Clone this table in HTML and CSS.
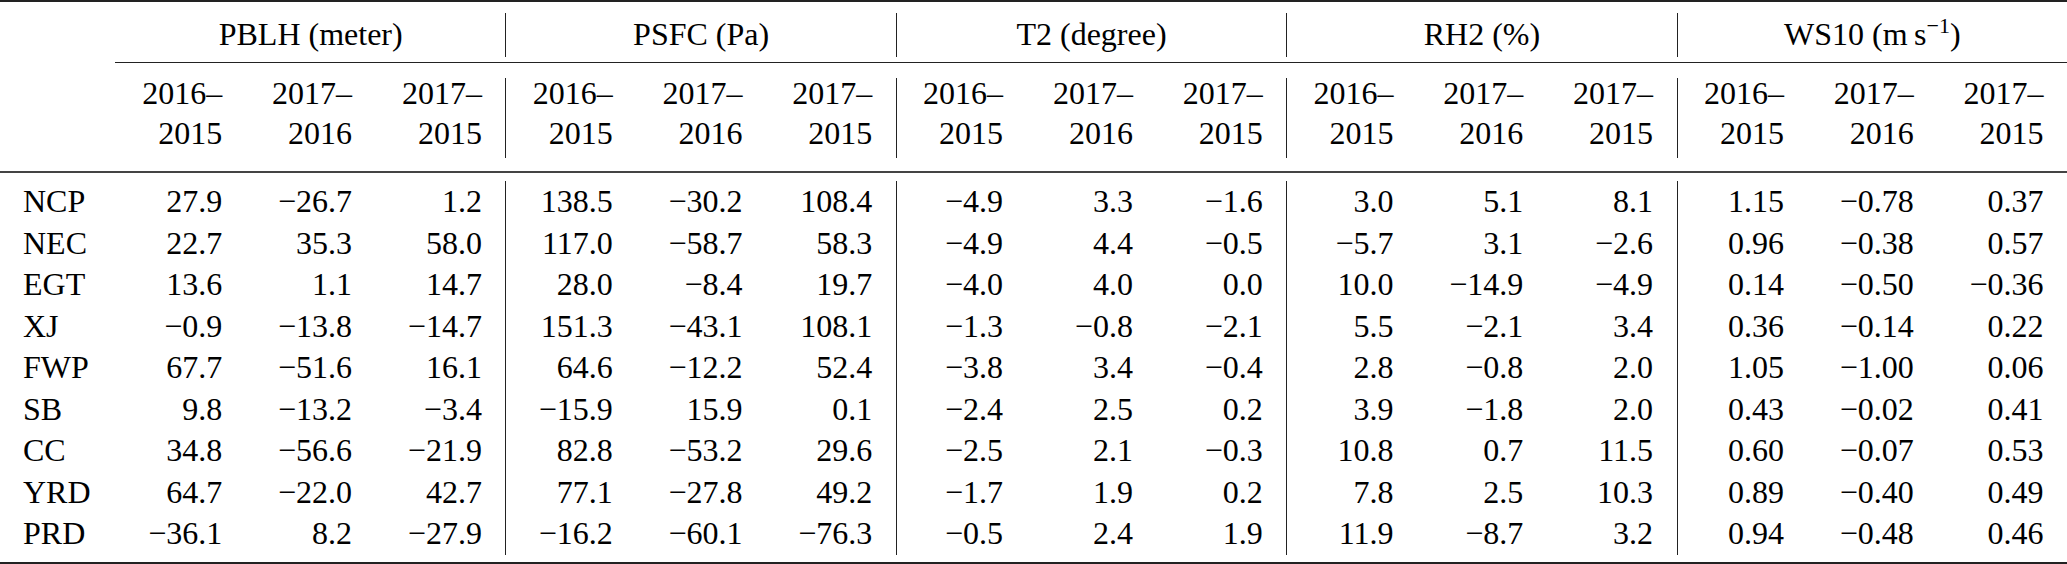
FILE: index.html
```html
<!DOCTYPE html>
<html>
<head>
<meta charset="utf-8">
<link rel="stylesheet" href="styles.css">
</head>
<body>
<div class="tbl">
  <div class="rule rule-top"></div>
  <div class="sec head1">
    <div class="lab"></div>
    <div class="grps">
      <div class="g first">PBLH (meter)</div>
      <div class="g">PSFC (Pa)</div>
      <div class="g">T2 (degree)</div>
      <div class="g">RH2 (%)</div>
      <div class="g">WS10 (m&thinsp;s<span class="sup">−1</span>)</div>
    </div>
  </div>
  <div class="sec head2">
    <div class="lab"></div>
    <div class="grps">
      <div class="g first"><div class="hc"><span>2016–</span><span>2015</span></div><div class="hc"><span>2017–</span><span>2016</span></div><div class="hc"><span>2017–</span><span>2015</span></div></div>
      <div class="g"><div class="hc"><span>2016–</span><span>2015</span></div><div class="hc"><span>2017–</span><span>2016</span></div><div class="hc"><span>2017–</span><span>2015</span></div></div>
      <div class="g"><div class="hc"><span>2016–</span><span>2015</span></div><div class="hc"><span>2017–</span><span>2016</span></div><div class="hc"><span>2017–</span><span>2015</span></div></div>
      <div class="g"><div class="hc"><span>2016–</span><span>2015</span></div><div class="hc"><span>2017–</span><span>2016</span></div><div class="hc"><span>2017–</span><span>2015</span></div></div>
      <div class="g"><div class="hc"><span>2016–</span><span>2015</span></div><div class="hc"><span>2017–</span><span>2016</span></div><div class="hc"><span>2017–</span><span>2015</span></div></div>
    </div>
  </div>
  <div class="rule rule-mid"></div>
  <div class="sec body">
    <div class="lab labcol">
      <div>NCP</div><div>NEC</div><div>EGT</div><div>XJ</div><div>FWP</div><div>SB</div><div>CC</div><div>YRD</div><div>PRD</div>
    </div>
    <div class="grps">
      <div class="g first">
        <div class="n">27.9</div><div class="n">−26.7</div><div class="n">1.2</div>
        <div class="n">22.7</div><div class="n">35.3</div><div class="n">58.0</div>
        <div class="n">13.6</div><div class="n">1.1</div><div class="n">14.7</div>
        <div class="n">−0.9</div><div class="n">−13.8</div><div class="n">−14.7</div>
        <div class="n">67.7</div><div class="n">−51.6</div><div class="n">16.1</div>
        <div class="n">9.8</div><div class="n">−13.2</div><div class="n">−3.4</div>
        <div class="n">34.8</div><div class="n">−56.6</div><div class="n">−21.9</div>
        <div class="n">64.7</div><div class="n">−22.0</div><div class="n">42.7</div>
        <div class="n">−36.1</div><div class="n">8.2</div><div class="n">−27.9</div>
      </div>
      <div class="g">
        <div class="n">138.5</div><div class="n">−30.2</div><div class="n">108.4</div>
        <div class="n">117.0</div><div class="n">−58.7</div><div class="n">58.3</div>
        <div class="n">28.0</div><div class="n">−8.4</div><div class="n">19.7</div>
        <div class="n">151.3</div><div class="n">−43.1</div><div class="n">108.1</div>
        <div class="n">64.6</div><div class="n">−12.2</div><div class="n">52.4</div>
        <div class="n">−15.9</div><div class="n">15.9</div><div class="n">0.1</div>
        <div class="n">82.8</div><div class="n">−53.2</div><div class="n">29.6</div>
        <div class="n">77.1</div><div class="n">−27.8</div><div class="n">49.2</div>
        <div class="n">−16.2</div><div class="n">−60.1</div><div class="n">−76.3</div>
      </div>
      <div class="g">
        <div class="n">−4.9</div><div class="n">3.3</div><div class="n">−1.6</div>
        <div class="n">−4.9</div><div class="n">4.4</div><div class="n">−0.5</div>
        <div class="n">−4.0</div><div class="n">4.0</div><div class="n">0.0</div>
        <div class="n">−1.3</div><div class="n">−0.8</div><div class="n">−2.1</div>
        <div class="n">−3.8</div><div class="n">3.4</div><div class="n">−0.4</div>
        <div class="n">−2.4</div><div class="n">2.5</div><div class="n">0.2</div>
        <div class="n">−2.5</div><div class="n">2.1</div><div class="n">−0.3</div>
        <div class="n">−1.7</div><div class="n">1.9</div><div class="n">0.2</div>
        <div class="n">−0.5</div><div class="n">2.4</div><div class="n">1.9</div>
      </div>
      <div class="g">
        <div class="n">3.0</div><div class="n">5.1</div><div class="n">8.1</div>
        <div class="n">−5.7</div><div class="n">3.1</div><div class="n">−2.6</div>
        <div class="n">10.0</div><div class="n">−14.9</div><div class="n">−4.9</div>
        <div class="n">5.5</div><div class="n">−2.1</div><div class="n">3.4</div>
        <div class="n">2.8</div><div class="n">−0.8</div><div class="n">2.0</div>
        <div class="n">3.9</div><div class="n">−1.8</div><div class="n">2.0</div>
        <div class="n">10.8</div><div class="n">0.7</div><div class="n">11.5</div>
        <div class="n">7.8</div><div class="n">2.5</div><div class="n">10.3</div>
        <div class="n">11.9</div><div class="n">−8.7</div><div class="n">3.2</div>
      </div>
      <div class="g">
        <div class="n">1.15</div><div class="n">−0.78</div><div class="n">0.37</div>
        <div class="n">0.96</div><div class="n">−0.38</div><div class="n">0.57</div>
        <div class="n">0.14</div><div class="n">−0.50</div><div class="n">−0.36</div>
        <div class="n">0.36</div><div class="n">−0.14</div><div class="n">0.22</div>
        <div class="n">1.05</div><div class="n">−1.00</div><div class="n">0.06</div>
        <div class="n">0.43</div><div class="n">−0.02</div><div class="n">0.41</div>
        <div class="n">0.60</div><div class="n">−0.07</div><div class="n">0.53</div>
        <div class="n">0.89</div><div class="n">−0.40</div><div class="n">0.49</div>
        <div class="n">0.94</div><div class="n">−0.48</div><div class="n">0.46</div>
      </div>
    </div>
  </div>
  <div class="rule rule-bot"></div>
</div>
</body>
</html>
```
FILE: styles.css
```css
* {
  box-sizing: border-box;
  margin: 0;
  padding: 0;
}

html, body {
  background: #fff;
}

body {
  margin: 0;
  font-family: "Liberation Serif", "Times New Roman", serif;
  font-size: 32px;
  color: #000;
}

.tbl {
  width: 2067px;
}

.rule {
  width: 100%;
}

.rule-top {
  height: 2px;
  background: #222;
}

.rule-mid {
  height: 2px;
  background: #444;
}

.rule-bot {
  height: 2px;
  background: #222;
}

.sec {
  display: flex;
}

.lab {
  width: 115px;
  flex: none;
}

.grps {
  flex: 1 1 0;
  display: flex;
}

.g {
  flex: 1 1 0;
  min-width: 0;
  border-left: 1px solid #222;
}

.g.first {
  border-left-color: transparent;
}

/* header row 1 */
.head1 .grps {
  padding: 11px 0 5px;
  border-bottom: 1px solid #222;
}

.head1 .g {
  height: 44px;
  line-height: 42px;
  text-align: center;
  white-space: nowrap;
}

.sup {
  font-size: 22px;
  line-height: 0;
  vertical-align: 12px;
}

/* header row 2 */
.head2 .grps {
  padding: 15px 0 13px;
}

.head2 .g {
  height: 80px;
  display: grid;
  grid-template-columns: repeat(3, 1fr);
}

.hc {
  display: flex;
  flex-direction: column;
  align-items: flex-end;
  padding-right: 23.5px;
  line-height: 40px;
  margin-top: -5px;
  white-space: nowrap;
}

/* body */
.body .grps {
  padding: 8px 0 7px;
}

.body .g {
  display: grid;
  grid-template-columns: repeat(3, 1fr);
  grid-auto-rows: 41.5px;
  line-height: 41.5px;
}

.n {
  text-align: right;
  padding-right: 23.5px;
  white-space: nowrap;
}

.labcol {
  padding: 8px 0 7px 23px;
}

.labcol div {
  height: 41.5px;
  line-height: 41.5px;
  white-space: nowrap;
}
```
